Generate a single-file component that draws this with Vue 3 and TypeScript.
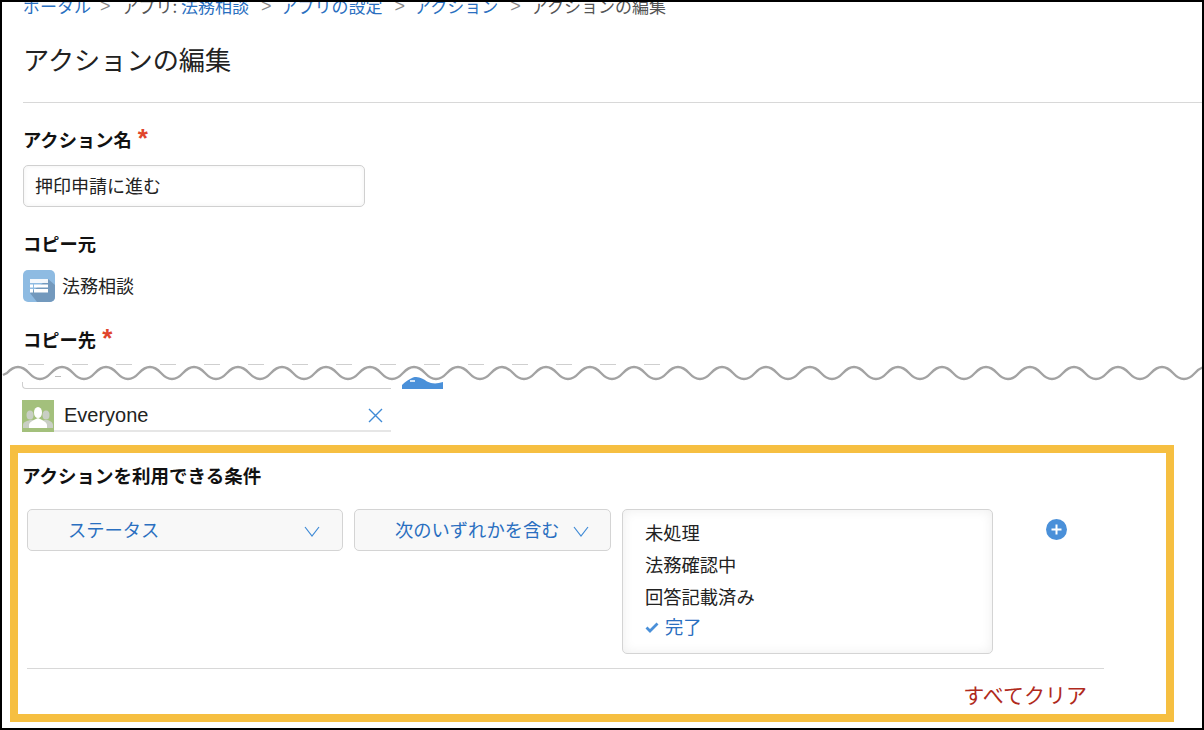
<script setup lang="ts">
const crumbs = [
  { t: 'ポータル', link: true },
  { t: 'アプリ: ', link: false, extra: '法務相談' },
  { t: 'アプリの設定', link: true },
  { t: 'アクション', link: true },
  { t: 'アクションの編集', link: false },
]
const statuses = ['未処理', '法務確認中', '回答記載済み']

let wavePath = 'M3 11 Q5 10 7 9 Q18 -3 29 9'
for (let x = 29; x < 1204; x += 22) wavePath += ` T${x + 22} 9`
</script>

<template>
  <div class="frame">
    <nav class="crumbs">
      <template v-for="(c, i) in crumbs" :key="i">
        <span v-if="i > 0" class="sep" :class="{ 'sep-first': i === 1, 'sep-last': i === 4 }">&gt;</span>
        <span :class="c.link ? 'link' : 'plain'">{{ c.t }}<span v-if="c.extra" class="link">{{ c.extra }}</span></span>
      </template>
    </nav>
    <h1 class="title">アクションの編集</h1>
    <div class="rule"></div>

    <div class="label first">アクション名<span class="req">*</span></div>
    <div class="input">押印申請に進む</div>

    <div class="label copy-from">コピー元</div>
    <div class="app-row">
      <svg class="app-icon" width="32" height="32" viewBox="0 0 32 32">
        <rect width="32" height="32" rx="5" fill="#8ebbe2" />
        <path d="M7 23 L25 9 L32 15 V27 a5 5 0 0 1 -5 5 H14 Z" fill="#7399bd" />
        <rect x="7" y="9" width="18" height="4" fill="#fff" opacity=".9" />
        <path d="M7 14.500h3v3H7zM11 14.500h14v3H11zM7 19h3v3.500H7zM11 19h14v3.500H11z" fill="#fff" />
      </svg>
      <span class="app-name">法務相談</span>
    </div>

    <div class="label copy-to">コピー先<span class="req">*</span></div>

    <div class="break">
      <div class="dashes"></div>
      <div class="cut-mark"></div>
      <div class="cut-input"></div>
      <svg class="cut-btn" width="42" height="12" viewBox="0 0 42 12">
        <path d="M0 12 V8 C3 5 7 2 11 0.500 C17 -1 21 2 25 4.500 C30 7 35 7 41 5 V12 Z" fill="#4a90d9" />
        <path d="M8 4h5" stroke="#fff" stroke-width="1.500" />
      </svg>
      <svg class="wave" width="1200" height="20" viewBox="2 0 1200 20">
        <path :d="wavePath" fill="none" stroke="#a3a3a3" stroke-width="2.300" />
      </svg>
    </div>

    <div class="user-row">
      <svg class="user-icon" width="32" height="32" viewBox="0 0 32 32">
        <rect width="32" height="32" fill="#a3c07c" />
        <g fill="#c9cfc4">
          <ellipse cx="8" cy="15" rx="3.500" ry="4.500" />
          <path d="M1 28 v-3 c0 -3 4 -4 7 -5 s7 2 7 5 v3z" />
          <ellipse cx="24" cy="15" rx="3.500" ry="4.500" />
          <path d="M17 28 v-3 c0 -3 4 -5 7 -5 s7 2 7 5 v3z" />
        </g>
        <g fill="#fff">
          <ellipse cx="16" cy="12.500" rx="4" ry="5.500" />
          <path d="M7 28 v-3 c0 -3 5 -5 9 -7 c4 2 9 4 9 7 v3z" />
        </g>
      </svg>
      <span class="user-name">Everyone</span>
      <svg class="close" width="15" height="15" viewBox="0 0 15 15">
        <path d="M1 1 L14 14 M14 1 L1 14" stroke="#3f8ad6" stroke-width="1.400" fill="none" />
      </svg>
    </div>

    <section class="cond">
      <div class="label cond-title">アクションを利用できる条件</div>
      <div class="cond-row">
        <div class="select field-select">
          <span class="sel-text">ステータス</span>
          <svg class="chev" width="16" height="11" viewBox="0 0 16 11"><path d="M1 1 L8 10 L15 1" fill="none" stroke="#3f8ad6" stroke-width="1.200" /></svg>
        </div>
        <div class="select op-select">
          <span class="sel-text">次のいずれかを含む</span>
          <svg class="chev" width="16" height="11" viewBox="0 0 16 11"><path d="M1 1 L8 10 L15 1" fill="none" stroke="#3f8ad6" stroke-width="1.200" /></svg>
        </div>
        <div class="list">
          <div v-for="s in statuses" :key="s" class="item">{{ s }}</div>
          <div class="item sel">
            <svg class="check" width="14" height="11" viewBox="0 0 14 11"><path d="M1.500 5.500 L5 9 L12.500 1.500" fill="none" stroke="#4a90d9" stroke-width="2.800" /></svg>
            <span>完了</span>
          </div>
        </div>
        <svg class="plus" width="21" height="21" viewBox="0 0 21 21">
          <circle cx="10.500" cy="10.500" r="10.500" fill="#4a90d9" />
          <path d="M10.500 5.500 V15.500 M5.500 10.500 H15.500" stroke="#fff" stroke-width="2" />
        </svg>
      </div>
      <div class="cond-rule"></div>
      <div class="clear">すべてクリア</div>
    </section>
  </div>
</template>

<style>
html, body { margin: 0; background: #fff; }
</style>

<style scoped>
.frame {
  box-sizing: border-box;
  width: 1204px;
  height: 730px;
  overflow: hidden;
  border: 2px solid #000;
  background: #fff;
  padding-left: 21px;
  font-family: "Noto Sans CJK JP", "Liberation Sans", sans-serif;
  color: #222;
}
.crumbs {
  display: flex;
  align-items: center;
  height: 14px;
  margin-top: -3px;
  font-size: 17px;
  line-height: 14px;
  white-space: nowrap;
}
.sep { color: #888; margin: 0 9px 0 12px; font-family: "Liberation Sans", sans-serif; font-size: 18px; }
.sep-first { margin: 0 11px 0 9px; }
.sep-last { margin: 0 10px 0 12px; }
.link { color: #2a6fc0; }
.plain { color: #555; }
.title {
  margin: 27px 0 0;
  font-size: 26.200px;
  line-height: 38px;
  font-weight: 400;
  color: #222;
}
.rule { height: 1px; background: #d8d8d8; margin-top: 24px; }
.label {
  font-size: 18.300px;
  font-weight: 700;
  line-height: 24px;
  color: #111;
  white-space: nowrap;
}
.first { margin-top: 24px; }
.req {
  color: #e0452c;
  font-size: 26px;
  line-height: 14px;
  margin-left: 6px;
  vertical-align: 0;
  font-family: "Liberation Sans", sans-serif;
}
.input {
  box-sizing: border-box;
  width: 342px;
  height: 42px;
  margin-top: 14px;
  padding-left: 11px;
  border: 1px solid #d0d0d0;
  border-radius: 5px;
  box-shadow: inset 0 0 5px rgba(0, 0, 0, .06);
  font-size: 18px;
  line-height: 38px;
}
.copy-from { margin-top: 24px; }
.app-row {
  display: flex;
  align-items: center;
  gap: 7px;
  height: 32px;
  margin-top: 15px;
  font-size: 18px;
}
.app-name { padding-bottom: 3px; }
.app-icon { display: block; }
.copy-to { margin-top: 25px; margin-bottom: 1px; }
.break { position: relative; height: 48px; margin-left: -21px; }
.dashes {
  position: absolute;
  left: 26px;
  top: 12px;
  width: 632px;
  height: 1px;
  background: repeating-linear-gradient(90deg, #cfcfcf 0 16px, #fff 16px 44px);
}
.cut-mark {
  position: absolute;
  left: 53px;
  top: 24px;
  width: 6px;
  height: 1px;
  background: #bbb;
}
.cut-input {
  position: absolute;
  left: 20px;
  top: 30px;
  width: 369px;
  height: 7px;
  box-sizing: border-box;
  border: 1px solid #cfcfcf;
  border-top: 0;
  border-right: 0;
  border-radius: 0 0 0 4px;
}
.cut-btn { position: absolute; left: 400px; top: 25px; }
.wave { position: absolute; left: 0; top: 12px; }
.user-row {
  display: flex;
  align-items: center;
  box-sizing: border-box;
  width: 369px;
  height: 32px;
  margin-left: -1px;
  border-bottom: 2px solid #e6e6e6;
}
.user-icon { display: block; flex: none; margin-bottom: -2px; }
.user-name { margin-left: 10px; font-family: "Liberation Sans", sans-serif; font-size: 20px; color: #222; }
.close { margin-left: auto; margin-right: 8px; }
.cond {
  box-sizing: border-box;
  width: 1164px;
  height: 277px;
  margin-left: -13px;
  margin-top: 13px;
  border: 8px solid #f6bf41;
  padding: 0 0 0 4px;
}
.cond-title { margin-top: 10px; font-size: 18.500px; }
.cond-row {
  display: flex;
  align-items: flex-start;
  margin-top: 22px;
  margin-left: 5px;
}
.select {
  box-sizing: border-box;
  display: flex;
  align-items: center;
  justify-content: space-between;
  height: 42px;
  border: 1px solid #d4d4d4;
  border-radius: 5px;
  background: #f8f8f8;
  color: #2a6fc0;
  font-size: 18.300px;
}
.sel-text { padding-bottom: 2px; }
.chev { margin-top: 3px; }
.field-select { width: 316px; padding: 0 22px 0 40px; }
.op-select { width: 257px; margin-left: 11px; padding: 0 21px 0 40px; }
.list {
  box-sizing: border-box;
  width: 371px;
  height: 145px;
  margin-left: 11px;
  padding: 7px 0 0 22px;
  border: 1px solid #d4d4d4;
  border-radius: 5px;
  box-shadow: inset 0 0 12px rgba(0, 0, 0, .07);
  font-size: 18.300px;
}
.item { line-height: 30px; height: 32px; color: #222; }
.sel { display: flex; align-items: flex-start; gap: 6px; color: #2a6fc0; line-height: 27px; }
.check { margin-top: 9px; }
.plus { margin-left: 53px; margin-top: 10px; }
.cond-rule { height: 1px; background: #d8d8d8; width: 1077px; margin: 14px 0 0 5px; }
.clear {
  width: 1065px;
  margin-top: 12px;
  text-align: right;
  font-size: 21px;
  line-height: 26px;
  color: #b02a1c;
}
</style>
